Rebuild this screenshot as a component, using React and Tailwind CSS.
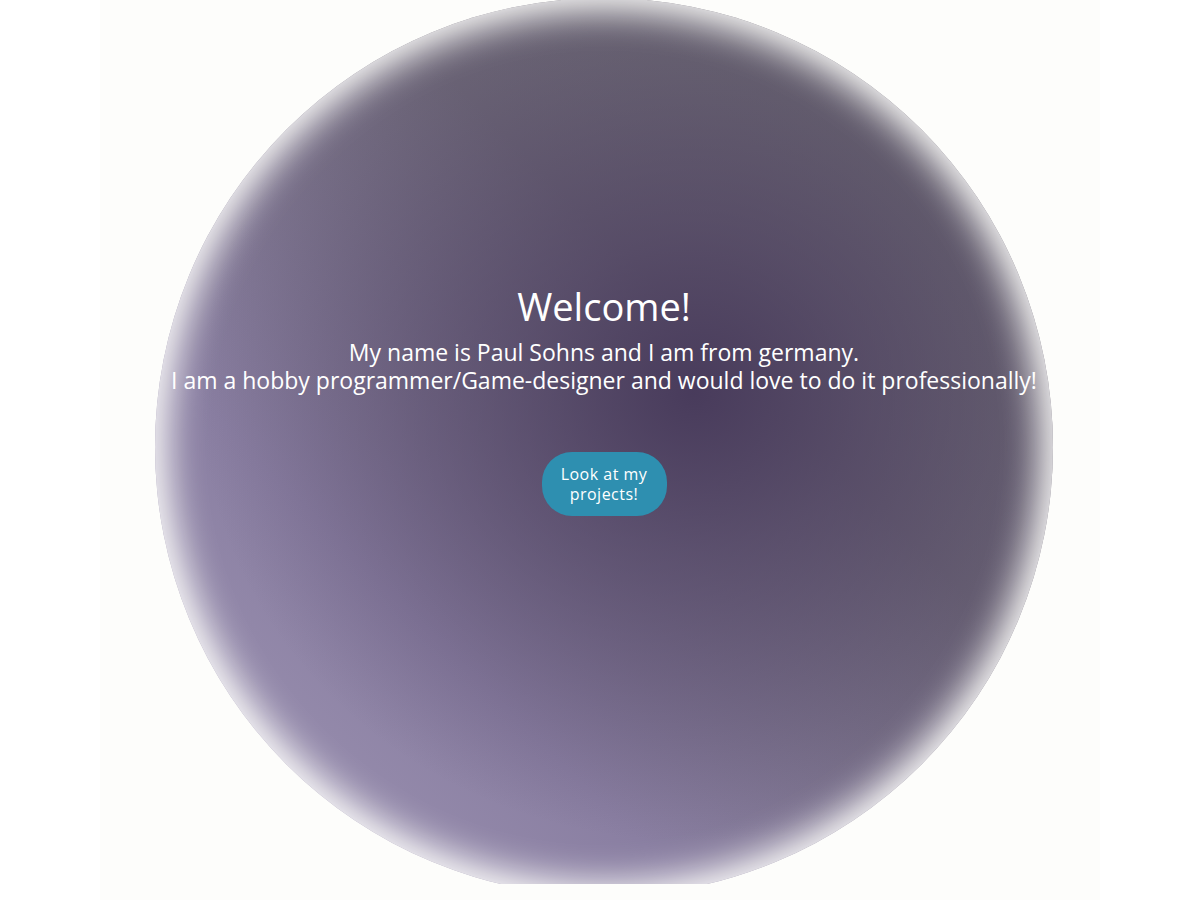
export default function App() {
  return (
    <div className="min-h-[900px] w-full bg-white font-['Segoe_UI','Open_Sans',sans-serif]">
      {/* Hauptbereich */}
      <main className="mx-auto h-[900px] w-[1000px] bg-[#fdfdfb]">
        <div className="h-[884px] overflow-hidden">
          <section className="-mt-[2px] ml-[55px] flex h-[898px] w-[898px] flex-col items-center rounded-full bg-[radial-gradient(ellipse_55%_50%_at_60%_44%,rgba(68,54,88,0.9)_0%,rgba(72,58,92,0.6)_35%,rgba(80,70,100,0)_100%),linear-gradient(to_top_right,#a198b6_0%,#8a7fa2_30%,#6e6878_62%,#6b6a6f_100%)] pt-[284px] text-center text-white shadow-[inset_0_0_36px_12px_#fdfdfb]">
            <h1 className="text-[38px] leading-[48px]">Welcome!</h1>
            <div className="mt-[8px] text-[23px] leading-[28px]">
              <p>My name is Paul Sohns and I am from germany.</p>
              <p>I am a hobby programmer/Game-designer and would love to do it professionally!</p>
            </div>
            <button className="mt-[58px] h-[64px] w-[125px] rounded-[30px] bg-[#2e8fb0] text-[16px] leading-[20px] tracking-[0.5px] text-white">
              Look at my
              <br />
              projects!
            </button>
          </section>
        </div>
      </main>
    </div>
  );
}
